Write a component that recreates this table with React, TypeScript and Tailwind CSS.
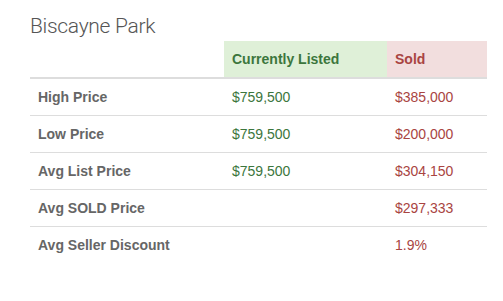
import React from "react";

const rows: { label: string; listed: string; sold: string }[] = [
  { label: "High Price", listed: "$759,500", sold: "$385,000" },
  { label: "Low Price", listed: "$759,500", sold: "$200,000" },
  { label: "Avg List Price", listed: "$759,500", sold: "$304,150" },
  { label: "Avg SOLD Price", listed: "", sold: "$297,333" },
  { label: "Avg Seller Discount", listed: "", sold: "1.9%" },
];

export default function App() {
  return (
    <div
      className="w-[503px] h-[301px] bg-white pl-[30px] pt-[14px]"
      style={{ fontFamily: '"Liberation Sans", Arial, sans-serif' }}
    >
      <h1
        className="text-[21px] leading-[24px] tracking-[-0.3px] font-light text-[#555] mb-[3px] font-[Roboto,_'Liberation_Sans',_sans-serif]"
      >
        Biscayne Park
      </h1>
      <table className="w-[457px] border-collapse text-[14px] leading-[20px]">
        <thead>
          <tr>
            <th className="w-[194px] p-[8px] border-b-2 border-[#ddd]"></th>
            <th className="w-[163px] p-[8px] text-left font-bold text-[#3c763d] bg-[#dff0d8] border-b-2 border-[#ddd]">
              Currently Listed
            </th>
            <th className="p-[8px] text-left font-bold text-[#a94442] bg-[#f2dede] border-b-2 border-[#ddd]">
              Sold
            </th>
          </tr>
        </thead>
        <tbody>
          {rows.map((r, i) => (
            <tr key={r.label} className={i > 0 ? "border-t border-[#ddd]" : ""}>
              <td className="p-[8px] font-bold text-[#666]">{r.label}</td>
              <td className="p-[8px] text-[#3c763d]">{r.listed}</td>
              <td className="p-[8px] text-[#a94442]">{r.sold}</td>
            </tr>
          ))}
        </tbody>
      </table>
    </div>
  );
}
